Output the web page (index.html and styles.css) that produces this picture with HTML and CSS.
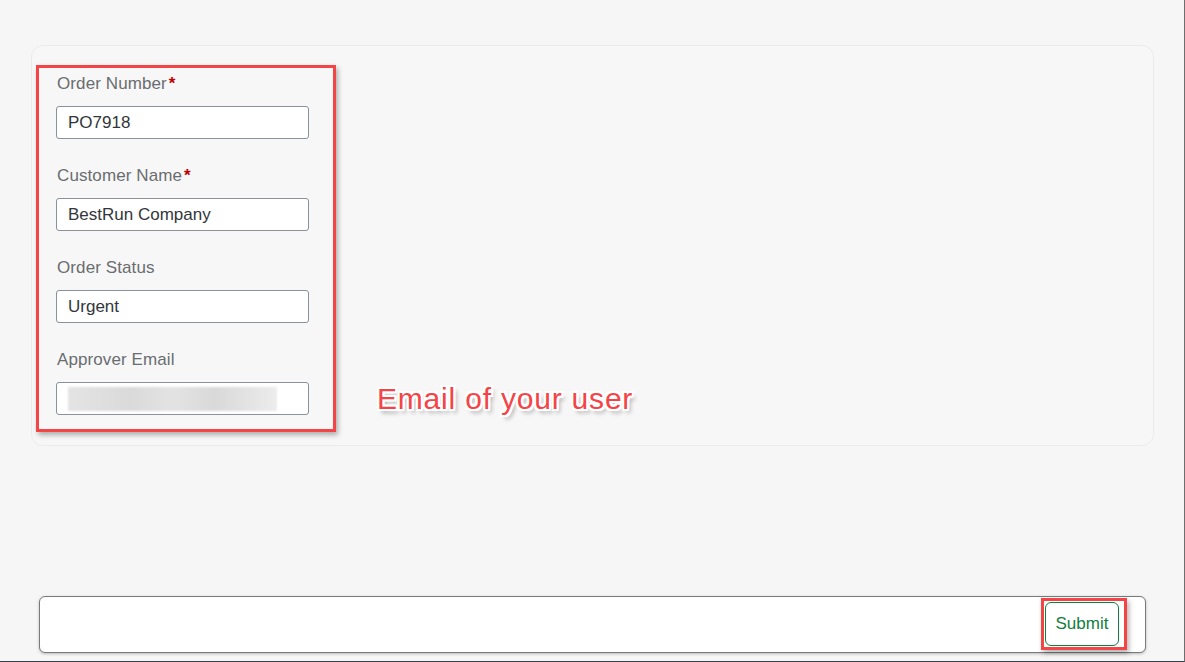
FILE: index.html
```html
<!DOCTYPE html>
<html lang="en">
<head>
<meta charset="utf-8">
<title>Order Form</title>
<link rel="stylesheet" href="styles.css">
</head>
<body>
<div class="page">
  <section class="card">
    <div class="highlight form">
      <div class="field">
        <label class="label">Order Number<span class="req">*</span></label>
        <div class="input">PO7918</div>
      </div>
      <div class="field">
        <label class="label">Customer Name<span class="req">*</span></label>
        <div class="input">BestRun Company</div>
      </div>
      <div class="field">
        <label class="label">Order Status</label>
        <div class="input">Urgent</div>
      </div>
      <div class="field">
        <label class="label">Approver Email</label>
        <div class="input"><span class="blurred"></span></div>
      </div>
    </div>
    <div class="note">Email of your user</div>
  </section>
  <footer class="footer">
    <div class="highlight btn-wrap">
      <button class="submit">Submit</button>
    </div>
  </footer>
</div>
</body>
</html>
```

FILE: styles.css
```css
* { box-sizing: border-box; }
html, body {
  margin: 0;
  padding: 0;
  background: #f6f6f6;
  font-family: "Liberation Sans", Arial, sans-serif;
}
.page {
  width: 1185px;
  height: 662px;
  display: flex;
  flex-direction: column;
  border-right: 1px solid #6e6e6e;
  border-bottom: 1px solid #33424c;
  background: #f6f6f6;
  overflow: hidden;
}
.card {
  margin: 45px 30px 0 31px;
  height: 401px;
  border: 1px solid #ebebeb;
  border-radius: 12px;
  background: #f7f7f7;
  display: flex;
  align-items: flex-start;
}
.highlight {
  border: 3px solid #f34446;
  box-shadow: 2px 3px 5px rgba(0, 0, 0, 0.3);
}
.form {
  margin: 19px 0 0 4px;
  width: 300px;
  height: 367px;
  padding: 6px 24px 0 17px;
  display: flex;
  flex-direction: column;
  gap: 27px;
}
.field {
  display: flex;
  flex-direction: column;
  gap: 12px;
}
.label {
  display: block;
  height: 20px;
  line-height: 20px;
  padding-left: 1px;
  font-size: 17px;
  letter-spacing: 0.1px;
  color: #6a6d70;
}
.req {
  color: #bb0000;
  font-weight: bold;
  margin-left: 2px;
}
.input {
  height: 33px;
  width: 253px;
  border: 1px solid #89919a;
  border-radius: 3px;
  background: #fff;
  padding: 0 11px;
  font-size: 17px;
  line-height: 30px;
  color: #32363a;
  display: flex;
  align-items: center;
}
.blurred {
  display: block;
  width: 209px;
  height: 24px;
  background: linear-gradient(90deg, #e4e4e4 0%, #dadada 30%, #e3e3e3 50%, #d9d9d9 70%, #ececec 100%);
  filter: blur(1px);
}
.note {
  margin: 336px 0 0 41px;
  font-size: 30px;
  letter-spacing: 0.8px;
  line-height: 34px;
  color: #f44447;
  text-shadow:
    -2px 0 0 #fff, 2px 0 0 #fff, 0 -2px 0 #fff, 0 2px 0 #fff,
    -2px -2px 0 #fff, 2px 2px 0 #fff, -2px 2px 0 #fff, 2px -2px 0 #fff,
    3px 4px 4px rgba(0, 0, 0, 0.35);
}
.footer {
  margin: auto 38px 8px 39px;
  height: 57px;
  background: #fff;
  border: 1px solid #7a7a7a;
  border-radius: 6px;
  box-shadow: 0 1px 3px rgba(0, 0, 0, 0.25);
  display: flex;
  justify-content: flex-end;
  align-items: flex-start;
  padding: 1px 18px 0 0;
}
.btn-wrap {
  width: 86px;
  height: 52px;
  padding: 1px 5px 1px 1px;
  display: flex;
}
.submit {
  flex: 1;
  background: #fff;
  border: 1px solid #107e3e;
  border-radius: 6px;
  color: #107e3e;
  font-family: "Liberation Sans", Arial, sans-serif;
  font-size: 17px;
  padding: 0;
}
```
